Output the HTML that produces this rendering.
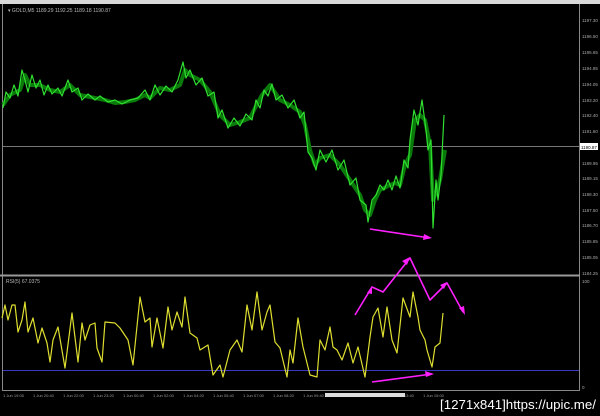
<!DOCTYPE html>
<html><head><meta charset="utf-8"><style>
html,body{margin:0;padding:0;background:#000;width:600px;height:416px;overflow:hidden}
svg{position:absolute;left:0;top:0}
.wm{position:absolute;left:440px;top:397px;color:#fff;font:13.3px "Liberation Sans",sans-serif;white-space:nowrap}
</style></head><body>
<svg width="600" height="416" viewBox="0 0 600 416">
<rect x="0" y="0" width="600" height="4" fill="#d8d8d8"/>
<line x1="2.5" y1="4" x2="2.5" y2="390" stroke="#888" stroke-width="1"/>
<line x1="579.5" y1="4" x2="579.5" y2="390" stroke="#888" stroke-width="1"/>
<line x1="2" y1="390.5" x2="580" y2="390.5" stroke="#888"/>
<line x1="0" y1="275.5" x2="580" y2="275.5" stroke="#999" stroke-width="2"/>
<line x1="3" y1="146.5" x2="579" y2="146.5" stroke="#777"/>
<line x1="3" y1="370.5" x2="579" y2="370.5" stroke="#3a3ac0"/>
<text x="8" y="12" fill="#bbb" font-family="Liberation Sans" font-size="5">▾ GOLD,M5  1189.29 1192.25 1189.18 1190.87</text>
<text x="6" y="283" fill="#bbb" font-family="Liberation Sans" font-size="5">RSI(5) 67.0375</text>
<g fill="#aaa" font-family="Liberation Sans" font-size="4.5">
<text x="582" y="22">1197.30</text><text x="582" y="38">1196.50</text><text x="582" y="54">1195.65</text><text x="582" y="70">1194.85</text><text x="582" y="86">1194.05</text><text x="582" y="102">1193.20</text><text x="582" y="117">1192.40</text><text x="582" y="133">1191.60</text><text x="582" y="165">1189.95</text><text x="582" y="180">1189.15</text><text x="582" y="196">1188.30</text><text x="582" y="212">1187.50</text><text x="582" y="227">1186.70</text><text x="582" y="243">1185.85</text><text x="582" y="259">1185.05</text><text x="582" y="275">1184.25</text><text x="582" y="283">100</text><text x="582" y="389">0</text>
</g>
<rect x="580" y="143" width="18" height="7" fill="#fff"/>
<text x="581" y="149" fill="#000" font-family="Liberation Sans" font-size="4.5">1190.87</text>
<g fill="#999" font-family="Liberation Sans" font-size="4">
<text x="3" y="397">1 Jun 19:05</text><text x="33" y="397">1 Jun 20:40</text><text x="63" y="397">1 Jun 22:00</text><text x="93" y="397">1 Jun 23:20</text><text x="123" y="397">1 Jun 00:40</text><text x="153" y="397">1 Jun 02:00</text><text x="183" y="397">1 Jun 04:20</text><text x="213" y="397">1 Jun 05:40</text><text x="243" y="397">1 Jun 07:00</text><text x="273" y="397">1 Jun 08:20</text><text x="303" y="397">1 Jun 09:40</text><text x="333" y="397">1 Jun 11:00</text><text x="363" y="397">1 Jun 12:20</text><text x="393" y="397">1 Jun 13:40</text><text x="423" y="397">1 Jun 15:00</text>
</g>
<rect x="325" y="393" width="80" height="4" fill="#ddd"/>
<polyline fill="none" stroke="#0a7a0a" stroke-width="4" stroke-linejoin="round" points="3,105 10,95 20,90 25,75 30,85 40,85 50,90 60,92 70,85 80,95 95,98 105,100 115,103 125,102 135,100 145,95 150,98 160,88 170,90 180,85 185,70 190,75 200,80 210,92 220,115 230,125 240,122 250,118 255,108 262,95 270,85 280,100 290,105 300,112 305,125 310,150 315,165 320,158 330,155 340,165 350,180 360,195 365,210 370,215 375,200 380,190 390,185 395,183 400,185 405,165 410,155 415,120 420,115 425,120 430,145 433,200 437,190 440,180 445,150"/>
<polyline fill="none" stroke="#30e030" stroke-width="1.2" stroke-linejoin="round" points="3,108 6,92 10,98 14,85 18,96 22,70 25,80 28,92 32,75 36,88 40,80 44,95 48,85 52,94 58,88 62,96 68,80 72,92 78,88 82,100 88,94 95,100 100,96 108,102 115,100 122,104 130,100 138,98 145,90 150,100 155,85 160,95 166,86 172,92 178,80 183,62 186,78 190,70 196,85 202,78 208,96 214,92 218,118 222,110 228,128 234,118 240,126 246,114 252,120 256,100 260,108 264,90 268,96 272,84 276,100 282,95 288,108 294,100 300,118 304,112 308,152 312,158 316,170 320,150 326,162 332,150 338,170 344,160 350,185 356,178 360,200 366,205 368,222 372,200 376,195 380,185 384,190 388,180 392,190 396,176 400,188 404,160 408,168 410,140 414,110 418,125 422,100 426,130 428,150 431,140 433,228 436,180 438,200 441,175 444,115"/>
<polyline fill="none" stroke="#dede30" stroke-width="1.2" stroke-linejoin="round" points="2,318 5,305 8,320 12,305 15,305 18,332 22,320 25,302 28,332 33,318 38,343 42,328 47,343 50,362 53,340 58,327 65,368 72,313 78,362 82,323 85,340 90,325 95,323 97,348 102,362 105,322 115,323 120,328 128,340 133,365 140,297 145,322 150,318 152,347 157,318 163,348 168,307 172,330 177,312 182,327 185,297 190,333 197,338 200,350 208,345 213,375 220,365 223,377 230,350 237,340 242,352 247,305 252,330 257,292 262,330 267,312 270,305 275,342 280,348 287,377 290,350 293,363 298,318 303,347 310,375 317,377 320,340 325,350 330,327 333,347 337,350 342,360 348,343 353,363 358,347 365,377 370,337 373,317 378,308 383,337 387,307 392,340 397,353 403,298 410,317 413,292 418,317 420,330 425,340 427,350 432,367 435,347 440,343 443,313"/>
<g stroke="#ff20ff" stroke-width="1.6" fill="none" stroke-linejoin="round">
<polyline points="370,229 430,238"/>
<polyline points="372,382 432,374"/>
<polyline points="355,315 372,287 383,292 410,258 430,300 447,283 463,312"/>
</g>
<g fill="#ff20ff">
<polygon points="432,238 424,234 423,240"/>
<polygon points="434,374 425,371 426,377"/>
<polygon points="465,315 459,308 464,306"/>
<polygon points="410,257 402,261 407,265"/>
<polygon points="372,286 367,293 372,294"/>
<polygon points="447,282 440,285 444,289"/>
</g>
</svg>
<div class="wm">[1271x841]https://upic.me/</div>
</body></html>
